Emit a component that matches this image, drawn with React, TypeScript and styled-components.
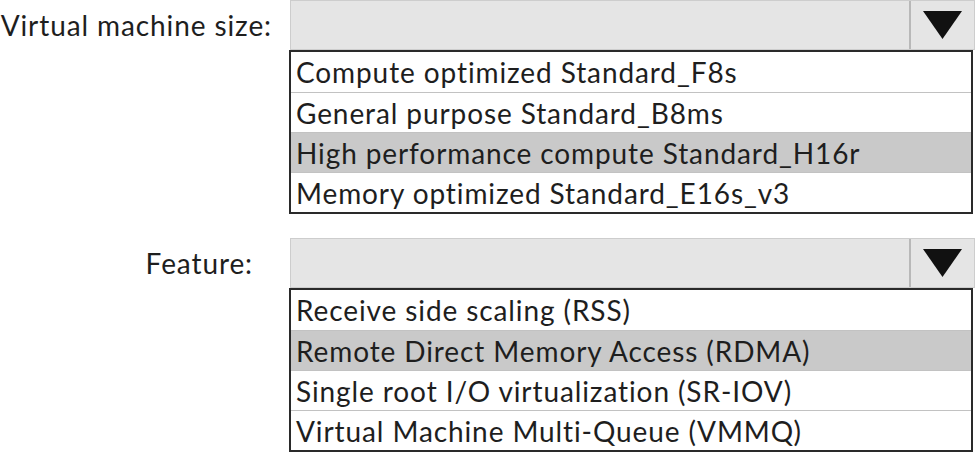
import styled, { createGlobalStyle } from "styled-components";

const GlobalStyle = createGlobalStyle`
  html, body {
    margin: 0;
    padding: 0;
    background: #fff;
  }
  body {
    font-family: Lato, "Open Sans", sans-serif;
    color: #1e1e1e;
  }
`;

type Question = {
  label: string;
  labelGap: number;
  options: string[];
  selected: number;
};

const questions: Question[] = [
  {
    label: "Virtual machine size:",
    labelGap: 18,
    options: [
      "Compute optimized Standard_F8s",
      "General purpose Standard_B8ms",
      "High performance compute Standard_H16r",
      "Memory optimized Standard_E16s_v3",
    ],
    selected: 2,
  },
  {
    label: "Feature:",
    labelGap: 37,
    options: [
      "Receive side scaling (RSS)",
      "Remote Direct Memory Access (RDMA)",
      "Single root I/O virtualization (SR-IOV)",
      "Virtual Machine Multi-Queue (VMMQ)",
    ],
    selected: 1,
  },
];

const App = () => {
  return (
    <>
      <GlobalStyle />
      <Page>
        {questions.map((q) => (
          <Group key={q.label}>
            <Label $gap={q.labelGap}>{q.label}</Label>
            <Select>
              <Field />
              <ArrowButton>
                <svg width="39" height="28" viewBox="0 0 39 28">
                  <polygon points="0,0 39,0 19.5,28" fill="#111" />
                </svg>
              </ArrowButton>
            </Select>
            <Spacer />
            <List>
              {q.options.map((opt, i) => (
                <Option key={opt} $active={i === q.selected}>
                  {opt}
                </Option>
              ))}
            </List>
          </Group>
        ))}
      </Page>
    </>
  );
};

export default App;

const Page = styled.div`
  width: 975px;
  height: 452px;
  display: flex;
  flex-direction: column;
  gap: 24px;
  overflow: hidden;
`;

const Group = styled.div`
  display: grid;
  grid-template-columns: 290px 685px;
  grid-template-rows: 50px auto;
`;

const Label = styled.div<{ $gap: number }>`
  display: flex;
  align-items: center;
  justify-content: flex-end;
  padding-right: ${(p) => p.$gap}px;
  font-size: 28px;
  letter-spacing: 0.9px;
  white-space: nowrap;
`;

const Select = styled.div`
  display: flex;
  background: #e5e5e5;
  border: 1px solid #cdcdcd;
  box-sizing: border-box;
`;

const Field = styled.div`
  flex: 1;
`;

const ArrowButton = styled.div`
  width: 63px;
  border-left: 2px solid #b8b8b8;
  display: flex;
  align-items: center;
  justify-content: center;
`;

const Spacer = styled.div``;

const List = styled.div`
  margin-left: -1px;
  margin-right: 2px;
  border: 2px solid #2a2a2a;
  background: #fff;
`;

const Option = styled.div<{ $active: boolean }>`
  height: 40px;
  box-sizing: border-box;
  display: flex;
  align-items: center;
  padding-left: 5px;
  font-size: 28px;
  letter-spacing: 0.9px;
  white-space: nowrap;
  background: ${(p) => (p.$active ? "#c9c9c9" : "#fff")};
  & + & {
    border-top: 1px solid #c2c2c2;
  }
`;
